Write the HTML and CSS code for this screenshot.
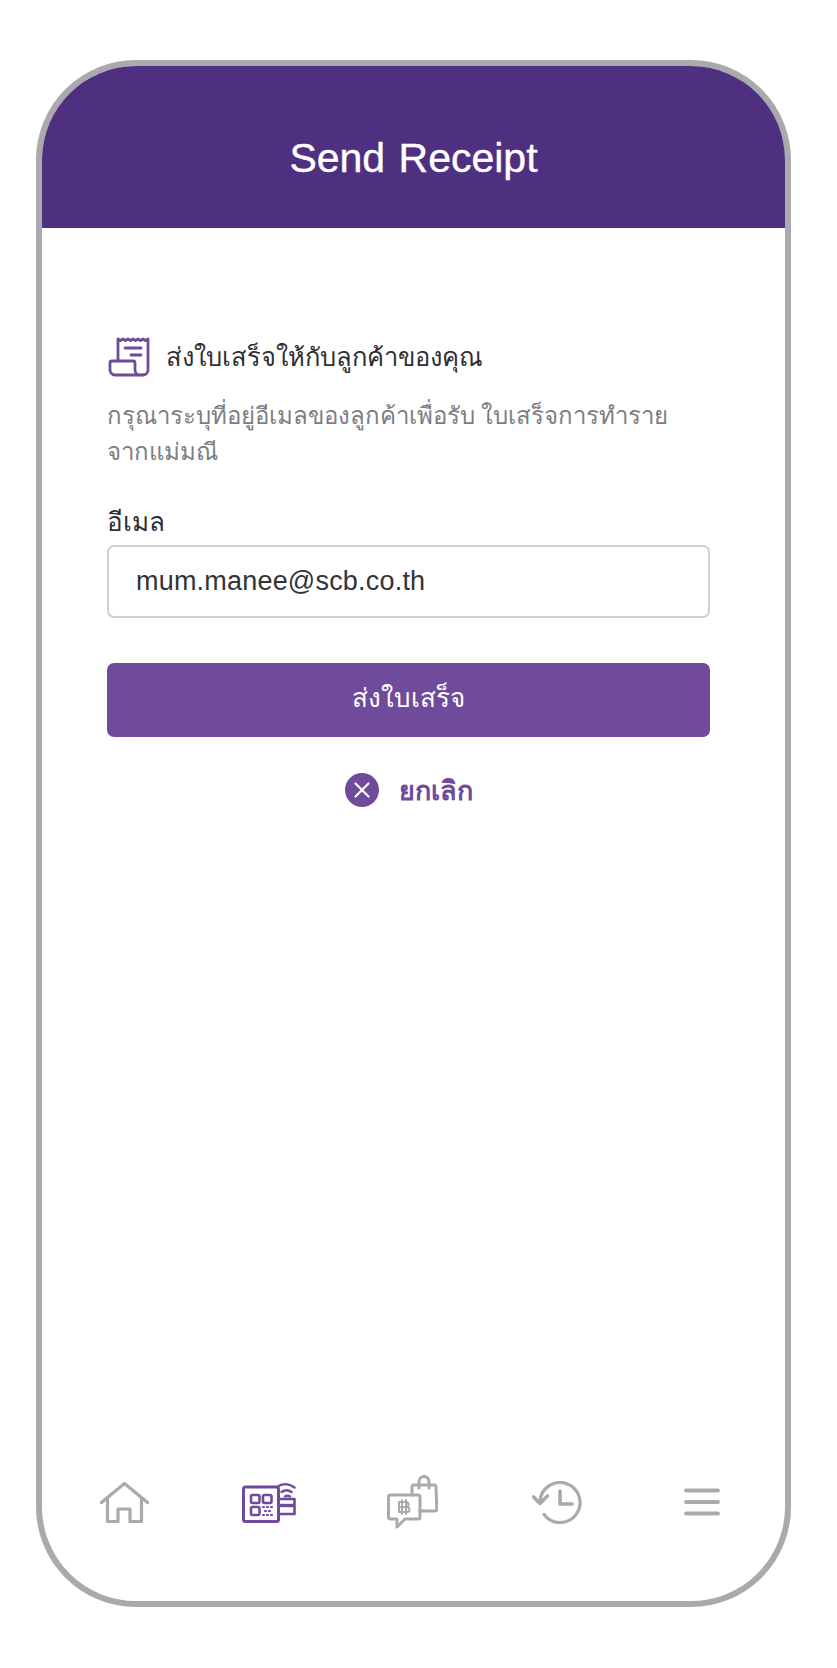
FILE: index.html
```html
<!DOCTYPE html>
<html lang="th">
<head>
    <meta charset="UTF-8">
    <meta name="viewport" content="width=device-width, initial-scale=1.0">
    <title>Send Receipt</title>
    <link rel="stylesheet" href="styles.css">
</head>
<body>
    <div class="phone">
        <header class="top-bar">
            <h1>Send Receipt</h1>
        </header>

        <main class="content">
            <div class="section-title">
                <svg width="43" height="40" viewBox="-1 0 43 40" fill="none" stroke="#704a9b" stroke-width="2.800" stroke-linecap="round" stroke-linejoin="round">
                    <path d="M10 24V2l2.500 1.500L15 2l2.500 1.500L20 2l2.500 1.500L25 2l2.500 1.500L30 2l2.500 1.500L35 2l2.500 1.500L40 2v31a5 5 0 0 1-5 5"/>
                    <path d="M17 11h16M23 18h10"/>
                    <path d="M35 38H7a5 5 0 0 1-5-5v-7a2 2 0 0 1 2-2h21a2 2 0 0 1 2 2v7a5 5 0 0 0 5 5"/>
                </svg>
                <span>ส่งใบเสร็จให้กับลูกค้าของคุณ</span>
            </div>
            <p class="hint">กรุณาระบุที่อยู่อีเมลของลูกค้าเพื่อรับ ใบเสร็จการทำราย<br>จากแม่มณี</p>

            <label class="field-label" for="email">อีเมล</label>
            <input class="email-input" id="email" type="text" value="mum.manee@scb.co.th">

            <button class="send-btn">ส่งใบเสร็จ</button>

            <a class="cancel-link" href="#">
                <svg width="34" height="34" viewBox="0 0 34 34">
                    <circle cx="17" cy="17" r="17" fill="#704a9b"/>
                    <path d="M10.500 10.500l13 13M23.500 10.500l-13 13" stroke="#fff" stroke-width="2.200" stroke-linecap="round"/>
                </svg>
                <span>ยกเลิก</span>
            </a>
        </main>

        <nav class="tab-bar">
            <svg width="49" height="41" viewBox="0 0 49 41" fill="none" stroke="#a9a9ae" stroke-width="3.200" stroke-linecap="round" stroke-linejoin="round">
                <path d="M1.500 20.500L24.500 1.500l23 19"/>
                <path d="M7.500 16v23.500H18V27h12v12.500h11.500V16"/>
            </svg>
            <svg width="54" height="41" viewBox="0 0 54 41" fill="none" stroke="#704a9b" stroke-width="3" stroke-linecap="round" stroke-linejoin="round">
                <rect x="1.500" y="5" width="35" height="34.500" rx="2"/>
                <rect x="9" y="13" width="8.500" height="8" rx="1.500" stroke-width="2.600"/>
                <rect x="21" y="13" width="8.500" height="8" rx="1.500" stroke-width="2.600"/>
                <rect x="9" y="25" width="8.500" height="8" rx="1.500" stroke-width="2.600"/>
                <path d="M21 25h1M25 25h1M29 25h1M23 29h1M27 29h1M21 33h1M25 33h1M29 33h1" stroke-width="2.200"/>
                <path d="M37 17h15.500v15H37" stroke-width="2.600"/>
                <path d="M37 23.500h15.500" stroke-width="3.400" stroke-linecap="butt"/>
                <path d="M35 5q8-6 17.500 .5M39.500 10q5-3.500 10 0M43 14.500q2.500-1.500 5 0" stroke-width="2.400"/>
            </svg>
            <svg width="51" height="54" viewBox="0 0 51 54" fill="none" stroke="#a9a9ae" stroke-width="3" stroke-linecap="round" stroke-linejoin="round">
                <path d="M31 20H3.500a2 2 0 0 0-2 2v20a2 2 0 0 0 2 2h6.500v8l8-8h13a2 2 0 0 0 2-2V22a2 2 0 0 0-2-2z"/>
                <path d="M25 20v-8a2 2 0 0 1 2-2h20a2 2 0 0 1 2 2l.800 22a2 2 0 0 1-2 2H33"/>
                <path d="M32 13V6.500a5 5 0 0 1 10 0V13"/>
                <path d="M15 25v14M19 25v14M12 27v10M12 27h7a2.500 2.500 0 0 1 0 5h-7M12 32h8a2.500 2.500 0 0 1 0 5h-8" stroke-width="2"/>
            </svg>
            <svg width="50" height="43" viewBox="0 0 50 43" fill="none" stroke="#a9a9ae" stroke-width="3.200" stroke-linecap="round" stroke-linejoin="round">
                <path d="M8 21.500A20 20 0 1 1 12 33.500"/>
                <path d="M1.600 16L8 22.500 15.500 15" stroke-width="3.600"/>
                <path d="M28 10v13h12" stroke-width="3.600"/>
            </svg>
            <svg width="36" height="28" viewBox="0 0 36 28" fill="none" stroke="#a9a9ae" stroke-width="3.800" stroke-linecap="round">
                <path d="M2 2.500h32M2 14h32M2 25.500h32"/>
            </svg>
        </nav>
    </div>
</body>
</html>
```

FILE: styles.css
```css
* {
    box-sizing: border-box;
    margin: 0;
    padding: 0;
}

body {
    background-color: #fff;
    font-family: 'Noto Sans', 'Liberation Sans', sans-serif;
    padding: 60px 46px 61px 36px;
    height: 1668px;
}

.phone {
    height: 1547px;
    border: 6px solid #a9a9ae;
    border-radius: 100px;
    display: flex;
    flex-direction: column;
    overflow: hidden;
}

.top-bar {
    height: 162px;
    padding-top: 22px;
    background-color: #4f2f7f;
    display: flex;
    justify-content: center;
    align-items: center;
    flex-shrink: 0;
}

.top-bar h1 {
    color: #fff;
    font-family: 'Liberation Sans', sans-serif;
    font-size: 41px;
    font-weight: 400;
    word-spacing: 2px;
    -webkit-text-stroke: 0.4px #fff;
}

.content {
    flex: 1;
    padding: 108px 75px 0 65px;
    display: flex;
    flex-direction: column;
}

.section-title {
    display: flex;
    align-items: center;
    gap: 16px;
    font-size: 25.5px;
    color: #2f2f33;
    height: 42px;
}

.hint {
    margin-top: 19px;
    font-size: 24px;
    line-height: 36px;
    color: #7d7d84;
}

.field-label {
    margin-top: 31px;
    font-size: 26px;
    line-height: 42px;
    color: #2f2f33;
}

.email-input {
    margin-top: 3px;
    height: 73px;
    border: 2px solid #cfcfd3;
    border-radius: 7px;
    padding: 0 27px;
    font-family: 'Liberation Sans', sans-serif;
    font-size: 27px;
    letter-spacing: 0.2px;
    color: #333338;
    background-color: #fff;
}

.send-btn {
    margin-top: 45px;
    height: 74px;
    padding-bottom: 5px;
    background-color: #704a9b;
    color: #fff;
    border: none;
    border-radius: 7px;
    font-family: inherit;
    font-size: 26px;
    font-weight: 500;
}

.cancel-link {
    margin-top: 36px;
    display: flex;
    justify-content: center;
    align-items: center;
    gap: 20px;
    color: #704a9b;
    font-size: 27px;
    line-height: 34px;
    font-weight: 600;
    text-decoration: none;
}

.tab-bar {
    padding: 0 11px 63px 10px;
    display: grid;
    grid-template-columns: repeat(5, 1fr);
    justify-items: center;
    align-items: center;
    height: 135px;
    flex-shrink: 0;
}
```
